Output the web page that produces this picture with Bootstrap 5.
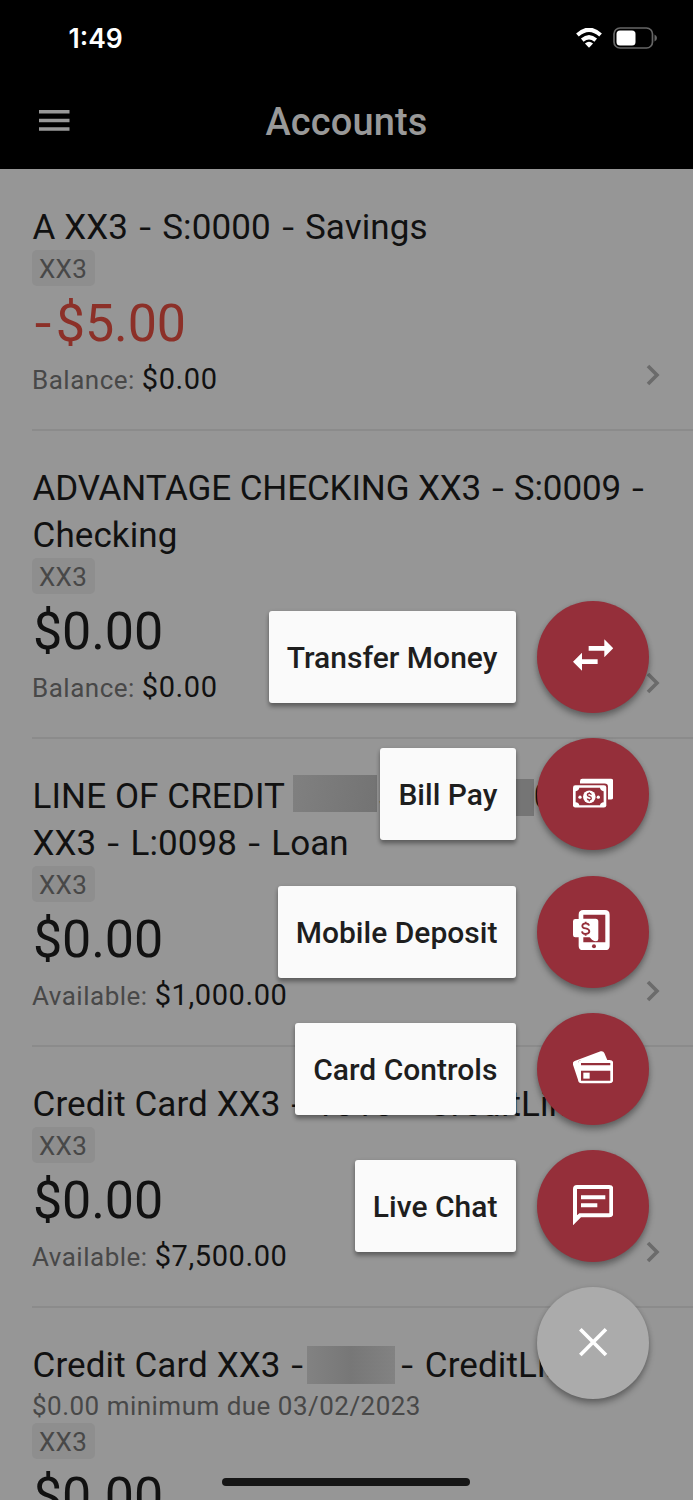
<!DOCTYPE html>
<html lang="en">
<head>
<meta charset="utf-8">
<meta name="viewport" content="width=device-width, initial-scale=1">
<title>Accounts</title>
<link rel="stylesheet" href="https://cdn.jsdelivr.net/npm/bootstrap@5.3.0/dist/css/bootstrap.min.css">
<style>
body{font-family:Roboto,"Liberation Sans",sans-serif;background:#969696;color:#111;height:1500px;overflow:hidden}
.screen{height:1500px}
.status{height:76px;background:#000;color:#fff;padding:0 35px 0 68.5px}
.clock{font:600 26.5px/77px Inter,sans-serif;letter-spacing:0}
.signals{gap:11px}
.appbar{height:93px;background:#000;color:#999;padding:0 38px}
.appbar h1{font-size:38px;font-weight:500;letter-spacing:.15px;line-height:97px}
.acct{margin-left:32px;padding:33.5px 0 0;height:261px;border-bottom:2px solid #8b8b8b;position:relative}
.acct:first-child{height:262px;padding-top:34.5px}
.acct.tall{height:308px}
.acct-title{font-size:35px;line-height:47px;letter-spacing:.1px;font-weight:400;white-space:nowrap;padding-left:.5px}
.tight{letter-spacing:-.12px}
.hy{display:inline-block;padding:0 3.4px;transform:scaleX(1.22)}
.tight .hy{padding:0 3px}
.chip{background:#8e8e8e;color:#484848;border-radius:5px;width:63px;height:36px;font-size:26px;line-height:38px;padding-left:7px;letter-spacing:.3px;margin-top:-1px}
.amount{font-size:52px;line-height:75px;letter-spacing:-.1px;height:76px;padding-left:1px}
.amount .hy{padding:0 5.5px 0 3px;transform:scaleX(1.15)}
.neg{color:#8c3028}
.detail{font-size:26px;line-height:35px;color:#484848;letter-spacing:.5px;white-space:nowrap}
.detail span{font-size:29px;color:#111;letter-spacing:.6px}
.due{font-size:26px;line-height:34px;height:35.5px;color:#484848;letter-spacing:.48px}
.chev{position:absolute;right:33px;bottom:43px}
.redact{display:inline-block;height:37px;vertical-align:-4px;margin-top:-10px;background:linear-gradient(100deg,#808080,#737373)}
.redact.soft{background:linear-gradient(90deg,#828282,#777 50%,#828282);height:38px;vertical-align:-7px}
.redact.low{vertical-align:-8px;background:#757575}
.dial{right:44px;top:601px;gap:25.3px}
.dial-row{gap:21.5px}
.dial-label{background:#fafafa;color:#1e1e1e;height:92px;border-radius:3px;padding:0 18px;font-size:30px;line-height:94px;font-weight:500;letter-spacing:.02px;box-shadow:0 4px 4px rgba(0,0,0,.3),0 1px 4px rgba(0,0,0,.15)}
.fab{width:112px;height:112px;background:#952f3a;padding-bottom:3px;box-shadow:0 5px 6px rgba(0,0,0,.28),0 1px 5px rgba(0,0,0,.15)}
.fab.off{background:#ababab}
.homebar{left:222px;top:1478px;width:248px;height:8px;background:#161616}
</style>
</head>
<body>
<div class="screen position-relative overflow-hidden">
  <div class="status d-flex align-items-center justify-content-between">
    <div class="clock">1:49</div>
    <div class="signals d-flex align-items-center">
      <svg width="26" height="20" viewBox="0 0 27 20" preserveAspectRatio="none" fill="none" stroke="#fff"><path d="M1.500 7Q13.500-3.500 25.500 7M6.500 12.200Q13.500 6.200 20.500 12.200" stroke-width="4.200"/><path d="M9.300 15.500Q13.500 12 17.700 15.500L13.500 19.800Z" fill="#fff" stroke="none"/></svg>
      <svg width="45" height="22" viewBox="0 0 45 22"><rect x="1" y="1" width="38.500" height="20" rx="6" fill="none" stroke="#666" stroke-width="1.700"/><rect x="3.500" y="3.500" width="19" height="15" rx="3.500" fill="#fff"/><path d="M41.500 7.500q2.500 1 2.500 3.500t-2.500 3.500z" fill="#666"/></svg>
    </div>
  </div>
  <div class="appbar d-flex align-items-center position-relative">
    <svg width="32" height="22" viewBox="0 0 32 22" fill="#999" style="margin-top:-4px"><path d="M1 0h30.500v3.500H1zM1 8.700h30.500v3.500H1zM1 17.300h30.500v3.500H1z"/></svg>
    <h1 class="position-absolute start-0 end-0 text-center m-0">Accounts</h1>
  </div>

  <main>
    <section class="acct"><h2 class="acct-title m-0">A XX3 <span class="hy">-</span> S:0000 <span class="hy">-</span> Savings</h2><div class="chip">XX3</div><div class="amount neg"><span class="hy">-</span>$5.00</div><div class="detail">Balance: <span>$0.00</span></div>
      <svg class="chev" width="14" height="22" viewBox="0 0 14 22" fill="none" stroke="#6b6b6b" stroke-width="3.600"><path d="M2 2 11 11 2 20"/></svg></section>
    <section class="acct tall"><h2 class="acct-title m-0"><span class="tight">ADVANTAGE CHECKING XX3 <span class="hy">-</span> S:0009 <span class="hy">-</span></span><br>Checking</h2><div class="chip">XX3</div><div class="amount">$0.00</div><div class="detail">Balance: <span>$0.00</span></div>
      <svg class="chev" width="14" height="22" viewBox="0 0 14 22" fill="none" stroke="#6b6b6b" stroke-width="3.600"><path d="M2 2 11 11 2 20"/></svg></section>
    <section class="acct tall"><h2 class="acct-title m-0">LINE OF CREDIT <i class="redact" style="width:84px"></i>5<i class="redact invisible" style="width:97px"></i>2<i class="redact low" style="width:20px"></i>0<br>XX3 <span class="hy">-</span> L:0098 <span class="hy">-</span> Loan</h2><div class="chip">XX3</div><div class="amount">$0.00</div><div class="detail">Available: <span>$1,000.00</span></div>
      <svg class="chev" width="14" height="22" viewBox="0 0 14 22" fill="none" stroke="#6b6b6b" stroke-width="3.600"><path d="M2 2 11 11 2 20"/></svg></section>
    <section class="acct"><h2 class="acct-title m-0">Credit Card XX3 <span class="hy">-</span> 1010 <span class="hy">-</span> CreditLine</h2><div class="chip">XX3</div><div class="amount">$0.00</div><div class="detail">Available: <span>$7,500.00</span></div>
      <svg class="chev" width="14" height="22" viewBox="0 0 14 22" fill="none" stroke="#6b6b6b" stroke-width="3.600"><path d="M2 2 11 11 2 20"/></svg></section>
    <section class="acct tall"><h2 class="acct-title m-0">Credit Card XX3 <span class="hy">-</span><i class="redact soft" style="width:88px;margin:-10px 4px 0 1.500px"></i><span class="hy">-</span> CreditLine</h2><div class="due">$0.00 minimum due 03/02/2023</div><div class="chip">XX3</div><div class="amount">$0.00</div></section>
  </main>

  <div class="dial position-absolute d-flex flex-column align-items-end">
    <div class="dial-row d-flex align-items-center"><div class="dial-label">Transfer Money</div><div class="fab rounded-circle d-flex align-items-center justify-content-center">
      <svg width="40.300" height="40.300" viewBox="160 138 121 121" fill="#fff"><path d="M207 171h47v-20l27 27-27 27v-20h-47zM234 211h-47v-20l-27 27 27 27v-20h47z"/></svg></div></div>
    <div class="dial-row d-flex align-items-center"><div class="dial-label">Bill Pay</div><div class="fab rounded-circle d-flex align-items-center justify-content-center">
      <svg width="40.300" height="40.300" viewBox="160 547.500 121 121"><path fill="#fff" d="M181 579v-7q0-7 7-7h86q7 0 7 7v48q0 7-7 7h-9v-38q0-10-10-10z"/><rect x="160" y="584" width="100" height="67" rx="7" fill="#fff"/><path fill="#952f3a" d="M179 592h62q1 9 11 10v33q-10 1-11 9h-62q-1-8-11-9v-33q10-1 11-10z"/><circle cx="209" cy="619" r="19" fill="#fff"/><circle cx="181" cy="620" r="5" fill="#fff"/><circle cx="236" cy="620" r="5" fill="#fff"/><path d="M215 613q-2-5-7-4-5 0-5 4t6 5q6 2 6 6t-6 4q-5 0-6-4M209 605v5M209 628v5" fill="none" stroke="#952f3a" stroke-width="4"/></svg></div></div>
    <div class="dial-row d-flex align-items-center"><div class="dial-label">Mobile Deposit</div><div class="fab rounded-circle d-flex align-items-center justify-content-center">
      <svg width="40.300" height="40.300" viewBox="160 149 121 121"><path fill="#fff" fill-rule="evenodd" d="M191 149h65q14 0 14 14v93q0 14-14 14h-65q-14 0-14-14v-25h-10q-7 0-7-7v-41q0-7 7-7h10v-13q0-14 14-14zM191 163v12h37q8 0 8 8v53q0 7-7 7-5 0-12-5l-7-7h-19v15h66v-83z"/><circle cx="223" cy="258" r="6" fill="#952f3a"/><path d="M208 196q-1-7-10-7t-10 7 10 8q11 2 11 9t-11 8q-10 0-11-8M198 184v6M198 220v6" fill="none" stroke="#952f3a" stroke-width="5.500"/></svg></div></div>
    <div class="dial-row d-flex align-items-center"><div class="dial-label">Card Controls</div><div class="fab rounded-circle d-flex align-items-center justify-content-center">
      <svg width="40.300" height="40.300" viewBox="160 560 121 121"><path fill="#fff" d="M176 661 160 613q-2-8 5-11l78-29q8-2 11 5l9 21h-77q-11 0-11 11z"/><path fill="#fff" fill-rule="evenodd" d="M186 599h84q11 0 11 11v47q0 12-11 12h-84q-11 0-11-12v-47q0-11 11-11zM184 608v7h88v-7zM184 631v30h88v-30z"/><path fill="#fff" d="M191 637h19v18h-19z"/></svg></div></div>
    <div class="dial-row d-flex align-items-center"><div class="dial-label">Live Chat</div><div class="fab rounded-circle d-flex align-items-center justify-content-center">
      <svg width="40.300" height="40.300" viewBox="160 162 121 121" fill="#fff"><path fill-rule="evenodd" d="M172 162h97q12 0 12 12v73q0 12-12 12h-85l-24 24V174q0-12 12-12zM172 174v79l7-6h90v-73z"/><path d="M184 193h73v12h-73zM184 217h49v12h-49z"/></svg></div></div>
    <div class="dial-row d-flex"><div class="fab off rounded-circle d-flex align-items-center justify-content-center">
      <svg width="40.300" height="40.300" viewBox="160 574 121 121" fill="none" stroke="#fff" stroke-width="11"><path d="m182 596 77 77M259 596l-77 77"/></svg></div></div>
  </div>
  <div class="homebar position-absolute rounded-pill"></div>
</div>
<script src="https://cdn.jsdelivr.net/npm/bootstrap@5.3.0/dist/js/bootstrap.bundle.min.js"></script>
</body>
</html>
